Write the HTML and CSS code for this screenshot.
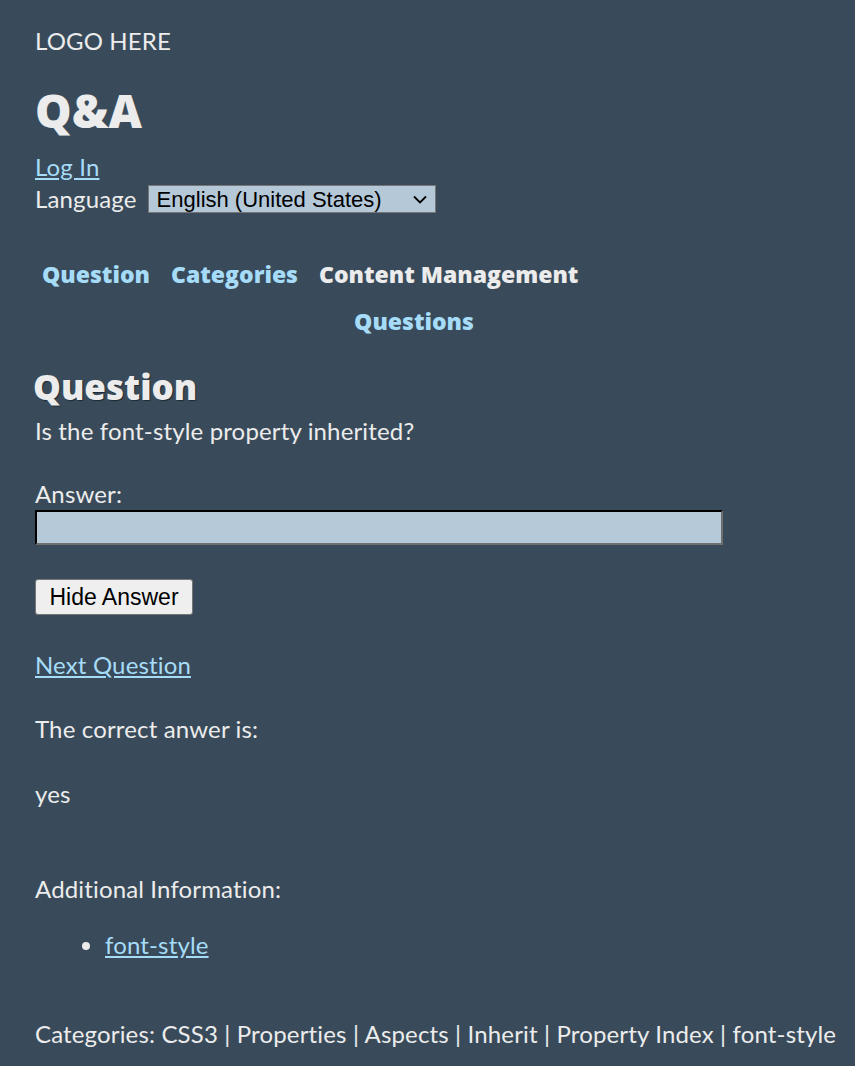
FILE: index.html
```html
<!DOCTYPE html>
<html lang="en">
<head>
<meta charset="utf-8">
<title>Q&amp;A</title>
<link rel="stylesheet" href="styles.css">
</head>
<body>
<div class="page">
  <header class="header">
    <div class="logo">LOGO HERE</div>
    <h1 class="title">Q&amp;A</h1>
    <a class="link login" href="#">Log In</a>
    <div class="lang-row">
      <span>Language</span>
      <span class="select-wrap">
        <select class="lang-select">
          <option>English (United States)</option>
        </select>
        <svg class="chevron" width="14" height="9" viewBox="0 0 14 9" aria-hidden="true">
          <path d="M1 1.5 L7 7.5 L13 1.5" fill="none" stroke="#000" stroke-width="1.8"/>
        </svg>
      </span>
    </div>
  </header>

  <nav class="nav">
    <div class="nav-row">
      <a class="nav-item" href="#">Question</a>
      <a class="nav-item" href="#">Categories</a>
      <span class="nav-item current">Content Management</span>
    </div>
    <div class="nav-row nav-row-center">
      <a class="nav-item" href="#">Questions</a>
    </div>
  </nav>

  <main class="main">
    <h2 class="q-heading">Question</h2>
    <p class="q-text">Is the font-style property inherited?</p>
    <label class="answer-label" for="answer">Answer:</label>
    <input class="answer-input" id="answer" type="text">
    <button class="btn" type="button">Hide Answer</button>
    <a class="link next" href="#">Next Question</a>
    <p class="correct">The correct anwer is:</p>
    <p class="yes">yes</p>
    <p class="additional">Additional Information:</p>
    <ul class="info-list">
      <li><a class="link" href="#">font-style</a></li>
    </ul>
    <p class="categories">Categories: CSS3 | Properties | Aspects | Inherit | Property Index | font-style</p>
  </main>
</div>
</body>
</html>
```

FILE: styles.css
```css
html, body {
  margin: 0;
  padding: 0;
  background: #394b5a;
}

body {
  color: #ececec;
  font-family: "Lato", "Open Sans", sans-serif;
  font-size: 24px;
  line-height: 32px;
  letter-spacing: 0.15px;
}

.page {
  padding: 25px 10px 0 35px;
}

.link {
  color: #a6dcf8;
  text-decoration: underline;
}

.header {
  display: flex;
  flex-direction: column;
  align-items: flex-start;
}

.logo {
  height: 32px;
}

.title {
  margin: 25px 0 13px 0;
  font-family: "Open Sans", "Lato", sans-serif;
  font-size: 46px;
  line-height: 56px;
  font-weight: 800;
  letter-spacing: 0;
  color: #ececec;
}

.login {
  display: block;
}

.lang-row {
  display: flex;
  align-items: center;
  gap: 11px;
  height: 32px;
}

.select-wrap {
  position: relative;
  display: inline-flex;
}

.lang-select {
  appearance: none;
  -webkit-appearance: none;
  height: 28px;
  width: 288px;
  background: #b4c8d8;
  border: 1px solid #767676;
  border-radius: 0;
  font-family: "Liberation Sans", Arial, sans-serif;
  font-size: 22px;
  letter-spacing: 0;
  color: #000;
  padding: 0 0 0 8px;
}

.chevron {
  position: absolute;
  right: 9px;
  top: 10px;
  pointer-events: none;
}

.nav {
  margin-top: 43px;
  width: 758px;
}

.nav-row {
  display: flex;
  gap: 21px;
  padding-left: 7px;
  height: 32px;
  align-items: center;
}

.nav-row-center {
  margin-top: 15px;
  justify-content: center;
  padding-left: 0;
}

.nav-item {
  font-family: "Open Sans", "Lato", sans-serif;
  font-weight: 800;
  font-size: 23px;
  color: #a6dcf8;
  text-decoration: none;
  letter-spacing: 0;
}

.nav-item.current {
  color: #ececec;
}

.main {
  margin-top: 28px;
}

.q-heading {
  margin: 0 0 6px -2px;
  font-family: "Open Sans", "Lato", sans-serif;
  font-size: 35px;
  line-height: 44px;
  font-weight: 800;
  color: #ececec;
  letter-spacing: 0;
  text-shadow: 1px 1px 1px #1f2a33;
}

.q-text {
  margin: 0;
}

.answer-label {
  display: block;
  margin-top: 31px;
}

.answer-input {
  display: block;
  box-sizing: border-box;
  width: 688px;
  height: 35px;
  margin: 0;
  background: #b5c9d8;
  border: 2px inset #777;
  border-top-color: #202020;
  border-left-color: #202020;
  border-bottom-color: #6f6f6f;
  border-right-color: #6f6f6f;
}

.btn {
  display: block;
  margin-top: 34px;
  height: 36px;
  width: 158px;
  padding: 0;
  background: #efefef;
  border: 1px solid #767676;
  border-radius: 3px;
  font-family: "Liberation Sans", Arial, sans-serif;
  font-size: 23px;
  letter-spacing: 0;
  color: #000;
}

.next {
  display: inline-block;
  margin-top: 34px;
}

.correct {
  margin: 32px 0 0 0;
}

.yes {
  margin: 33px 0 0 0;
}

.additional {
  margin: 63px 0 0 0;
}

.info-list {
  margin: 24px 0 0 0;
  padding-left: 70px;
}

.categories {
  margin: 57px 0 0 0;
  white-space: nowrap;
}
```
